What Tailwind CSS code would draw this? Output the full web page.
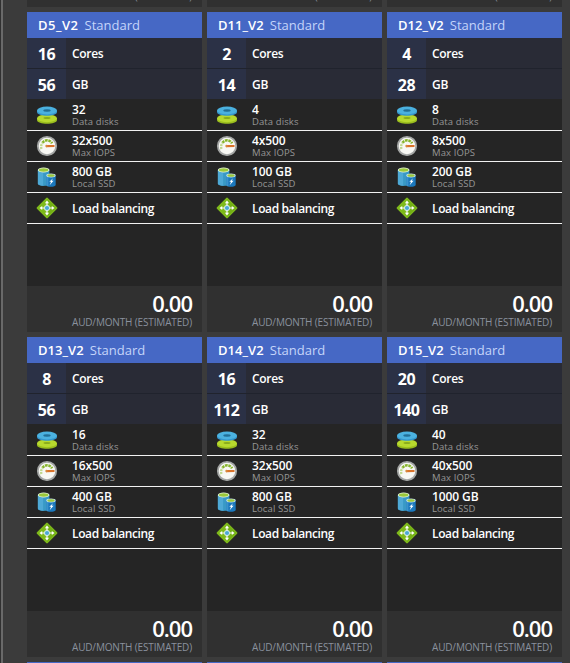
<!DOCTYPE html>
<html lang="en">

<head>
  <meta charset="UTF-8">
  <meta name="viewport" content="width=device-width, initial-scale=1.0">
  <title>Choose a size</title>
  <script src="https://cdn.jsdelivr.net/npm/@tailwindcss/browser@4"></script>
</head>

<body class="h-screen overflow-hidden bg-[#3b3b3b] font-['Open_Sans','Noto_Sans',sans-serif] text-white">
  <svg class="hidden">
    <symbol id="icon-disks" viewBox="0 0 22 20">
      <path d="M1 13.500V15c0 5 20 5 20 0v-1.500z" fill="#9abd1e" />
      <ellipse cx="11" cy="13.300" rx="10" ry="3.900" fill="#b8d92e" />
      <ellipse cx="11" cy="13" rx="3.500" ry="1" fill="#8aac1c" />
      <path d="M1 5.500V7c0 5 20 5 20 0V5.500z" fill="#3496cd" />
      <ellipse cx="11" cy="5.500" rx="10" ry="3.900" fill="#4bb1df" />
      <ellipse cx="11" cy="5.500" rx="3.700" ry="1.200" fill="#226f96" />
    </symbol>
    <symbol id="icon-gauge" viewBox="0 0 22 22">
      <circle cx="11" cy="11" r="9.200" fill="#f8f8f4" stroke="#a5a7a6" stroke-width="1.800" />
      <path d="M6.500 7.800A5.500 5.500 0 0 1 16 8.300" fill="none" stroke="#87b52b" stroke-width="2.600" stroke-dasharray="2.600 .7" />
      <path d="M5.500 14A6 6 0 0 1 6.500 8" fill="none" stroke="#bfd88e" stroke-width="2.400" stroke-dasharray="2 .8" />
      <path d="M10 10l8.500 .1v1.900l-8.500 .3z" fill="#d9722a" />
      <circle cx="10.500" cy="11" r="1.200" fill="#d7893c" />
    </symbol>
    <symbol id="icon-ssd" viewBox="-.8 -.8 21 21">
      <path d="M1 3v13c0 3 11 3 11 0V3z" fill="#3999c6" />
      <path d="M1 3v13c0 1.400 2.500 2 5 2V3z" fill="#4ea9d6" />
      <ellipse cx="6.500" cy="3" rx="5.500" ry="2.300" fill="#e3f2d6" />
      <ellipse cx="6.500" cy="3" rx="4.500" ry="1.600" fill="#9bc83b" />
      <path d="M9 8.500v8.500c0 2.700 9 2.700 9 0V8.500z" fill="#1b78bd" />
      <path d="M9 8.500v8.500c0 1 1 1.500 2 1.800V8.500z" fill="#3a92cb" />
      <ellipse cx="13.500" cy="8.300" rx="4.500" ry="1.900" fill="#c4e2ee" />
      <ellipse cx="13.500" cy="8.300" rx="3.500" ry="1.200" fill="#9bc83b" />
      <path d="M15.500 10.800l-3.600 3.400h1.700l-1.400 3.300 3.800-4.200h-1.900z" fill="#fff" />
    </symbol>
    <symbol id="icon-balancer" viewBox="0 0 22 22">
      <path d="M11 1.700L20.300 11 11 20.300 1.700 11z" fill="#7fba1b" stroke="#7fba1b" stroke-width="2.200" stroke-linejoin="round" />
      <path d="M11 1.700L20.300 11 11 20.300z" fill="#74b016" />
      <path d="M11 5v12M5 11h12" stroke="#fff" stroke-width="1.200" />
      <path d="M11 3.500l2.100 2.700H8.900zM11 18.500l2.100-2.700H8.900zM3.500 11l2.700-2.100v4.200zM18.500 11l-2.700-2.100v4.200z" fill="#fff" />
      <circle cx="11" cy="11" r="2.900" fill="#d8ecf2" />
      <circle cx="11" cy="11" r="2.100" fill="#4ba9d3" />
    </symbol>
  </svg>

  <div class="flex h-full border-l border-[#303030]">
    <div class="w-[2px] shrink-0 bg-[#696969]"></div>
    <div class="ml-[24px] flex h-full shrink-0 flex-col gap-[5px] overflow-hidden">
      <!-- bottom edge of the row scrolled out above -->
      <div id="previousRow" class="grid h-[7px] shrink-0 grid-cols-[repeat(3,175px)] gap-[5px] overflow-hidden"></div>
      <div id="sizeList" class="grid shrink-0 grid-cols-[repeat(3,175px)] gap-[5px]"></div>
      <!-- top edge of the next row -->
      <div class="grid h-[1px] shrink-0 grid-cols-[repeat(3,175px)] gap-[5px]">
        <div class="bg-[#4668c5]"></div>
        <div class="bg-[#4668c5]"></div>
        <div class="bg-[#4668c5]"></div>
      </div>
    </div>
  </div>

  <script>
    const sizes = [
      ['D5_V2', 16, 56, 32, '32x500', '800 GB'],
      ['D11_V2', 2, 14, 4, '4x500', '100 GB'],
      ['D12_V2', 4, 28, 8, '8x500', '200 GB'],
      ['D13_V2', 8, 56, 16, '16x500', '400 GB'],
      ['D14_V2', 16, 112, 32, '32x500', '800 GB'],
      ['D15_V2', 20, 140, 40, '40x500', '1000 GB'],
    ];

    const priceUnit = '<div class="text-[10px] leading-[12px] tracking-[-0.15px] text-[#8a919d]">AUD/MONTH (ESTIMATED)</div>';

    const spec = (value, label, height) => `
      <div class="flex ${height} shrink-0 items-center bg-[#292b36]">
        <div class="flex h-full w-[39px] items-center justify-center bg-[#2b3146] pt-[2px] text-[16px] font-bold tracking-[-0.5px]">${value}</div>
        <div class="pt-[2px] pl-[6px] text-[12px] font-semibold tracking-[-0.3px]">${label}</div>
      </div>`;

    const feature = (icon, value, label) => `
      <div class="flex h-[31px] items-center border-b border-[#f2f2f2]">
        <div class="flex w-[45px] shrink-0 pl-[9px]">
          <svg class="h-[22px] w-[22px]"><use href="#${icon}" /></svg>
        </div>
        <div>
          <div class="text-[12px] leading-[13px] font-semibold ${label ? 'tracking-[-0.1px]' : 'tracking-[-0.38px]'}">${value}</div>
          ${label ? `<div class="text-[9.5px] leading-[11px] tracking-[0.1px] text-[#969696]">${label}</div>` : ''}
        </div>
      </div>`;

    document.getElementById('previousRow').innerHTML = [1, 2, 3].map(() => `
      <div class="flex h-[7px] items-end justify-end bg-[#303030] pr-[10px] pb-[5px]">${priceUnit}</div>`).join('');

    document.getElementById('sizeList').innerHTML = sizes.map(([name, cores, ram, disks, iops, ssd]) => `
      <div class="flex h-[320px] flex-col bg-[#252525] whitespace-nowrap">
        <div class="flex h-[26px] shrink-0 items-center gap-[6px] bg-[#4668c5] pt-[2px] pl-[11px] text-[13px]">
          <span class="font-semibold ${name.length > 5 ? 'tracking-[0.05px]' : 'tracking-[0.5px]'}">${name}</span>
          <span class="text-[#c5d5fa]">Standard</span>
        </div>
        ${spec(cores, 'Cores', 'h-[31px] border-b border-[#20232d]')}
        ${spec(ram, 'GB', 'h-[30px]')}
        <div class="pt-[1px]">
          ${feature('icon-disks', disks, 'Data disks')}
          ${feature('icon-gauge', iops, 'Max IOPS')}
          ${feature('icon-ssd', ssd, 'Local SSD')}
          ${feature('icon-balancer', 'Load balancing', '')}
        </div>
        <div class="mt-auto h-[46px] bg-[#303030] pt-[6px] pr-[10px] text-right">
          <div class="mb-[1px] text-[22px] leading-[23px] font-semibold tracking-[-1px]">0.00</div>
          ${priceUnit}
        </div>
      </div>`).join('');
  </script>
</body>

</html>
